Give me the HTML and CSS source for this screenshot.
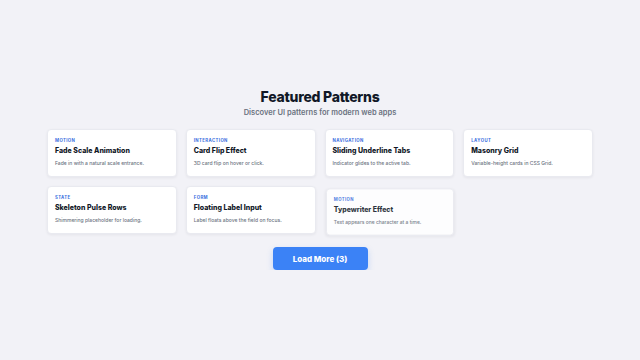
FILE: index.html
```html
<!DOCTYPE html>
<html>
<head>
    <title>Featured Patterns</title>
    <link rel="stylesheet" href="styles.css">
</head>
<body>
    <main class="page">
        <header class="page-header">
            <h1 class="page-title">Featured Patterns</h1>
            <p class="page-subtitle">Discover UI patterns for modern web apps</p>
        </header>
        <div class="pattern-grid">
            <div class="pattern-card">
                <div class="pattern-tag">Motion</div>
                <div class="pattern-title">Fade Scale Animation</div>
                <div class="pattern-desc">Fade in with a natural scale entrance.</div>
            </div>
            <div class="pattern-card">
                <div class="pattern-tag">Interaction</div>
                <div class="pattern-title">Card Flip Effect</div>
                <div class="pattern-desc">3D card flip on hover or click.</div>
            </div>
            <div class="pattern-card">
                <div class="pattern-tag">Navigation</div>
                <div class="pattern-title">Sliding Underline Tabs</div>
                <div class="pattern-desc">Indicator glides to the active tab.</div>
            </div>
            <div class="pattern-card">
                <div class="pattern-tag">Layout</div>
                <div class="pattern-title">Masonry Grid</div>
                <div class="pattern-desc">Variable-height cards in CSS Grid.</div>
            </div>
            <div class="pattern-card">
                <div class="pattern-tag">State</div>
                <div class="pattern-title">Skeleton Pulse Rows</div>
                <div class="pattern-desc">Shimmering placeholder for loading.</div>
            </div>
            <div class="pattern-card">
                <div class="pattern-tag">Form</div>
                <div class="pattern-title">Floating Label Input</div>
                <div class="pattern-desc">Label floats above the field on focus.</div>
            </div>
            <div class="pattern-card entering">
                <div class="pattern-tag">Motion</div>
                <div class="pattern-title">Typewriter Effect</div>
                <div class="pattern-desc">Text appears one character at a time.</div>
            </div>
        </div>
        <div class="load-bar">
            <button class="load-more">Load More (3)</button>
        </div>
    </main>
</body>
</html>
```

FILE: styles.css
```css
body {
    margin: 0;
    background: #f2f2f7;
    font-family: Inter, "Noto Sans", sans-serif;
    color: #111827;
}
.page {
    width: 546px;
    margin: 0 auto;
    padding-top: 88px;
}
.page-header {
    text-align: center;
    margin-bottom: 11px;
}
.page-title {
    margin: 0;
    font-size: 14px;
    line-height: 18px;
    font-weight: 800;
    color: #111827;
    letter-spacing: -0.25px;
}
.page-subtitle {
    margin: 2px 0 0;
    font-size: 7.5px;
    line-height: 10px;
    font-weight: 600;
    color: #6b7280;
}
.pattern-grid {
    display: grid;
    grid-template-columns: repeat(4, 1fr);
    gap: 9px;
}
.pattern-card {
    background: #fff;
    border-radius: 4px;
    border: 1px solid #e9eaf0;
    box-shadow: 0 1px 3px rgba(17, 24, 39, 0.06);
    padding: 8px 7px 9px;
}
.pattern-card.entering {
    opacity: 0.88;
    transform: translateY(2px) scale(0.985);
}
.pattern-tag {
    font-size: 4.3px;
    line-height: 6px;
    font-weight: 700;
    text-transform: uppercase;
    letter-spacing: 0.4px;
    color: #3b6fe0;
    margin-bottom: 2px;
}
.pattern-title {
    font-size: 7px;
    line-height: 10px;
    font-weight: 800;
    color: #111827;
    margin-bottom: 3px;
}
.pattern-desc {
    font-size: 5px;
    line-height: 8px;
    font-weight: 500;
    color: #6b7280;
}
.load-bar {
    display: flex;
    justify-content: center;
    margin-top: 13px;
}
.load-more {
    width: 95px;
    height: 23px;
    border: none;
    border-radius: 4px;
    background: #3b82f6;
    color: #fff;
    font-family: Inter, "Noto Sans", sans-serif;
    font-size: 8px;
    font-weight: 800;
    box-shadow: 0 3px 6px rgba(59, 130, 246, 0.25);
    cursor: pointer;
}
```
